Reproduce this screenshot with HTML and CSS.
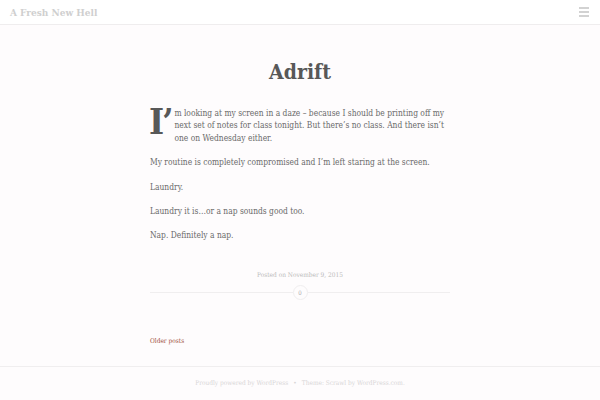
FILE: index.html
```html
<!DOCTYPE html>
<html>
<head>
<meta charset="utf-8">
<link rel="stylesheet" href="styles.css">
</head>
<body>
<header class="site-header">
  <div class="site-title">A Fresh New Hell</div>
  <div class="menu-toggle"><span></span><span></span><span></span></div>
</header>
<main class="site-main">
  <article class="post">
    <h1 class="entry-title">Adrift</h1>
    <div class="entry-content">
      <p class="first"><span class="dropcap">I’</span>m looking at my screen in a daze – because I should be printing off my next set of notes for class tonight. But there’s no class. And there isn’t one on Wednesday either.</p>
      <p>My routine is completely compromised and I’m left staring at the screen.</p>
      <p>Laundry.</p>
      <p>Laundry it is…or a nap sounds good too.</p>
      <p>Nap. Definitely a nap.</p>
    </div>
    <div class="entry-meta">Posted on November 9, 2015</div>
    <div class="entry-footer">
      <span class="rule"></span>
      <span class="comments">0</span>
      <span class="rule"></span>
    </div>
  </article>
  <nav class="posts-nav"><a href="#">Older posts</a></nav>
</main>
<footer class="site-footer">
  <span>Proudly powered by WordPress</span><span class="sep">•</span><span>Theme: Scrawl by WordPress.com.</span>
</footer>
</body>
</html>
```
FILE: styles.css
```css
html, body {
  margin: 0;
  padding: 0;
}
body {
  background: #fefcfd;
  font-family: "DejaVu Serif Condensed", "DejaVu Serif", "Liberation Serif", serif;
  font-stretch: condensed;
  color: #666;
  width: 600px;
  height: 400px;
  overflow: hidden;
  display: flex;
  flex-direction: column;
}
.site-header {
  height: 24px;
  border-bottom: 1px solid #efedee;
  display: flex;
  align-items: center;
  justify-content: space-between;
  padding: 0 11px 0 10px;
  background: #fff;
}
.site-title {
  font-size: 10px;
  font-weight: bold;
  color: #cfcfcf;
}
.menu-toggle {
  display: flex;
  flex-direction: column;
  gap: 2px;
  width: 10px;
}
.menu-toggle span {
  display: block;
  height: 2px;
  background: #d2d2d2;
}
.site-main {
  width: 300px;
  margin: 0 auto;
  flex: 1;
}
.entry-title {
  margin: 33px 0 0;
  text-align: center;
  font-size: 21px;
  font-weight: bold;
  color: #585858;
  line-height: 28px;
}
.entry-content {
  margin-top: 21px;
  font-size: 8.4px;
  line-height: 12.4px;
  color: #6a6a6a;
}
.entry-content p {
  margin: 0 0 12px;
}
.dropcap {
  float: left;
  font-size: 36px;
  line-height: 28px;
  font-weight: bold;
  color: #585858;
  margin: 0 3px 0 -1px;
  letter-spacing: -2px;
}
.entry-meta {
  margin-top: 29px;
  text-align: center;
  font-size: 6.5px;
  color: #bbb;
}
.entry-footer {
  margin-top: 6px;
  display: flex;
  align-items: center;
}
.rule {
  flex: 1;
  height: 1px;
  background: #f0eeef;
}
.comments {
  width: 13px;
  height: 13px;
  border-radius: 50%;
  border: 1px solid #f0eeef;
  font-size: 6px;
  color: #aaa;
  display: flex;
  align-items: center;
  justify-content: center;
}
.posts-nav {
  margin-top: 37px;
  font-size: 6.5px;
}
.posts-nav a {
  color: #a0503c;
  text-decoration: none;
}
.site-footer {
  height: 34px;
  border-top: 1px solid #f0eeef;
  display: flex;
  align-items: center;
  justify-content: center;
  font-size: 6.5px;
  color: #d8d6d7;
  padding-bottom: 2px;
  box-sizing: border-box;
}
.sep {
  margin: 0 5px;
}
```
